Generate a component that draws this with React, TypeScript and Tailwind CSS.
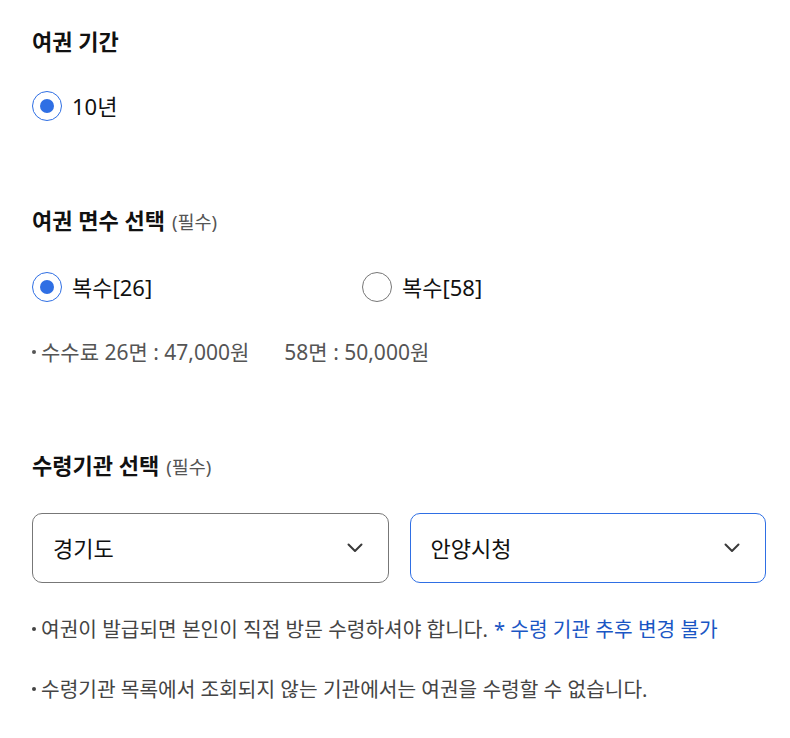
import React from "react";

const font = { fontFamily: '"Noto Sans", "Noto Sans CJK KR", sans-serif' };

function Radio({ checked }: { checked: boolean }) {
  return (
    <span
      className={
        "flex h-[30px] w-[30px] shrink-0 items-center justify-center rounded-full border " +
        (checked ? "border-[#2f6fe4]" : "border-[#777777]")
      }
    >
      {checked && <span className="h-[14px] w-[14px] rounded-full bg-[#2f6fe4]" />}
    </span>
  );
}

function Chevron() {
  return (
    <svg width="16" height="16" viewBox="0 0 16 16" fill="none">
      <path d="M1.5 4.5 L8 11 L14.5 4.5" stroke="#3a3a3a" strokeWidth="2" strokeLinecap="round" strokeLinejoin="round" />
    </svg>
  );
}

function Bullet({ color }: { color: string }) {
  return <span className={"mr-[5px] inline-block h-[4px] w-[4px] shrink-0 rounded-full " + color} />;
}

export default function App() {
  return (
    <div className="w-[790px] bg-white pl-8 pr-6 text-[#111]" style={font}>
      <div className="pt-[26px]">
        <h2 className="text-[22px] font-bold leading-[30px]">여권 기간</h2>
        <div className="mt-[35px] flex items-center gap-[10px]">
          <Radio checked />
          <span className="text-[22px] leading-[30px]">10년</span>
        </div>
      </div>

      <div className="mt-[84px]">
        <h2 className="flex items-baseline text-[22px] font-bold leading-[30px]">
          여권 면수 선택<span className="ml-[7px] text-[18.5px] font-normal text-[#555]">(필수)</span>
        </h2>
        <div className="mt-[35px] flex items-center">
          <div className="flex w-[330px] items-center gap-[10px]">
            <Radio checked />
            <span className="text-[22px] leading-[30px]">복수[26]</span>
          </div>
          <div className="flex items-center gap-[10px]">
            <Radio checked={false} />
            <span className="text-[22px] leading-[30px]">복수[58]</span>
          </div>
        </div>
        <p className="mt-[36px] flex items-center whitespace-nowrap text-[21px] leading-[28px] text-[#555]">
          <Bullet color="bg-[#555]" />
          수수료 26면 : 47,000원<span className="ml-[35px]">58면 : 50,000원</span>
        </p>
      </div>

      <div className="mt-[84px]">
        <h2 className="flex items-baseline text-[22px] font-bold leading-[30px]">
          수령기관 선택<span className="ml-[7px] text-[18.5px] font-normal text-[#555]">(필수)</span>
        </h2>
        <div className="mt-[31px] grid grid-cols-2 gap-[21px]">
          <div className="flex h-[70px] items-center justify-between rounded-[10px] border border-[#777] pl-[20px] pr-[25px]">
            <span className="text-[22px]">경기도</span>
            <Chevron />
          </div>
          <div className="flex h-[70px] items-center justify-between rounded-[10px] border border-[#2f6fe4] pl-[20px] pr-[25px]">
            <span className="text-[22px]">안양시청</span>
            <Chevron />
          </div>
        </div>
        <p className="mt-[32px] flex items-center whitespace-nowrap text-[20.25px] leading-[28px] text-[#444]">
          <Bullet color="bg-[#444]" />
          여권이 발급되면 본인이 직접 방문 수령하셔야 합니다.
          <span className="ml-[6px] text-[#1a56c4]">* 수령 기관 추후 변경 불가</span>
        </p>
        <p className="mt-[32px] flex items-center whitespace-nowrap text-[20.25px] leading-[28px] text-[#444]">
          <Bullet color="bg-[#444]" />
          수령기관 목록에서 조회되지 않는 기관에서는 여권을 수령할 수 없습니다.
        </p>
      </div>
      <div className="h-[30px]" />
    </div>
  );
}
